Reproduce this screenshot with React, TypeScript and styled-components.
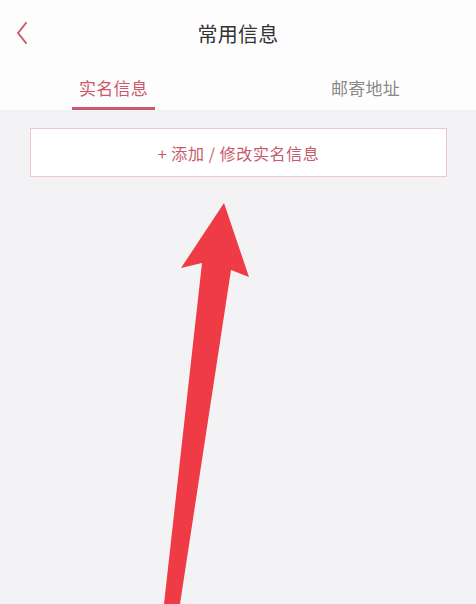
import React, { useState } from "react";
import styled, { createGlobalStyle } from "styled-components";

const GlobalStyle = createGlobalStyle`
  html, body {
    margin: 0;
    padding: 0;
    background: #f3f2f4;
  }
  body {
    font-family: "Noto Sans CJK SC", "Noto Sans", sans-serif;
  }
`;

const Screen = styled.div`
  position: relative;
  width: 476px;
  height: 604px;
  overflow: hidden;
  background: #f3f2f4;
`;

const Header = styled.header`
  background: #fefdfe;
`;

const TitleBar = styled.div`
  position: relative;
  height: 70px;
  display: flex;
  align-items: center;
  justify-content: center;
  padding-bottom: 3px;
  box-sizing: border-box;
`;

const BackButton = styled.button`
  position: absolute;
  left: 10px;
  top: 19px;
  width: 24px;
  height: 28px;
  padding: 0;
  border: none;
  background: transparent;
  display: flex;
  align-items: center;
  justify-content: center;
`;

const Title = styled.h1`
  margin: 0;
  font-size: 20px;
  font-weight: 400;
  color: #333;
  letter-spacing: 0.3px;
`;

const TabBar = styled.nav`
  height: 40px;
  display: flex;
  padding-left: 72px;
  gap: 169px;
`;

const Tab = styled.button<{ $active?: boolean }>`
  width: 83px;
  padding: 0;
  border: none;
  background: transparent;
  font-family: inherit;
  font-size: 17px;
  color: ${(p) => (p.$active ? "#c9596a" : "#888")};
  border-bottom: 3px solid ${(p) => (p.$active ? "#c9596a" : "transparent")};
  display: flex;
  align-items: center;
  justify-content: center;
  padding-bottom: 3px;
  letter-spacing: 0.2px;
`;

const Body = styled.main`
  padding: 18px 29px 0 30px;
`;

const AddButton = styled.button`
  width: 100%;
  height: 49px;
  background: #fff;
  border: 1px solid #e7c9ce;
  font-family: inherit;
  font-size: 16px;
  color: #c75b6c;
  letter-spacing: 0.6px;
`;

const Annotation = styled.svg`
  position: absolute;
  left: 0;
  top: 0;
  pointer-events: none;
`;

export default function App() {
  const [tab, setTab] = useState(0);
  return (
    <Screen>
      <GlobalStyle />
      <Header>
        <TitleBar>
          <BackButton aria-label="back">
            <svg width="16" height="22" viewBox="0 0 16 22">
              <path
                d="M12 1 L4 11 L12 21"
                fill="none"
                stroke="#c9596a"
                strokeWidth="2"
                strokeLinecap="round"
                strokeLinejoin="round"
              />
            </svg>
          </BackButton>
          <Title>常用信息</Title>
        </TitleBar>
        <TabBar>
          <Tab $active={tab === 0} onClick={() => setTab(0)}>
            实名信息
          </Tab>
          <Tab $active={tab === 1} onClick={() => setTab(1)}>
            邮寄地址
          </Tab>
        </TabBar>
      </Header>
      <Body>
        <AddButton>+ 添加 / 修改实名信息</AddButton>
      </Body>
      <Annotation width="476" height="604" viewBox="0 0 476 604">
        <polygon
          points="224,203 249,277 231,270 180,604 164,604 202,263 181,268"
          fill="#ef3b45"
        />
      </Annotation>
    </Screen>
  );
}
